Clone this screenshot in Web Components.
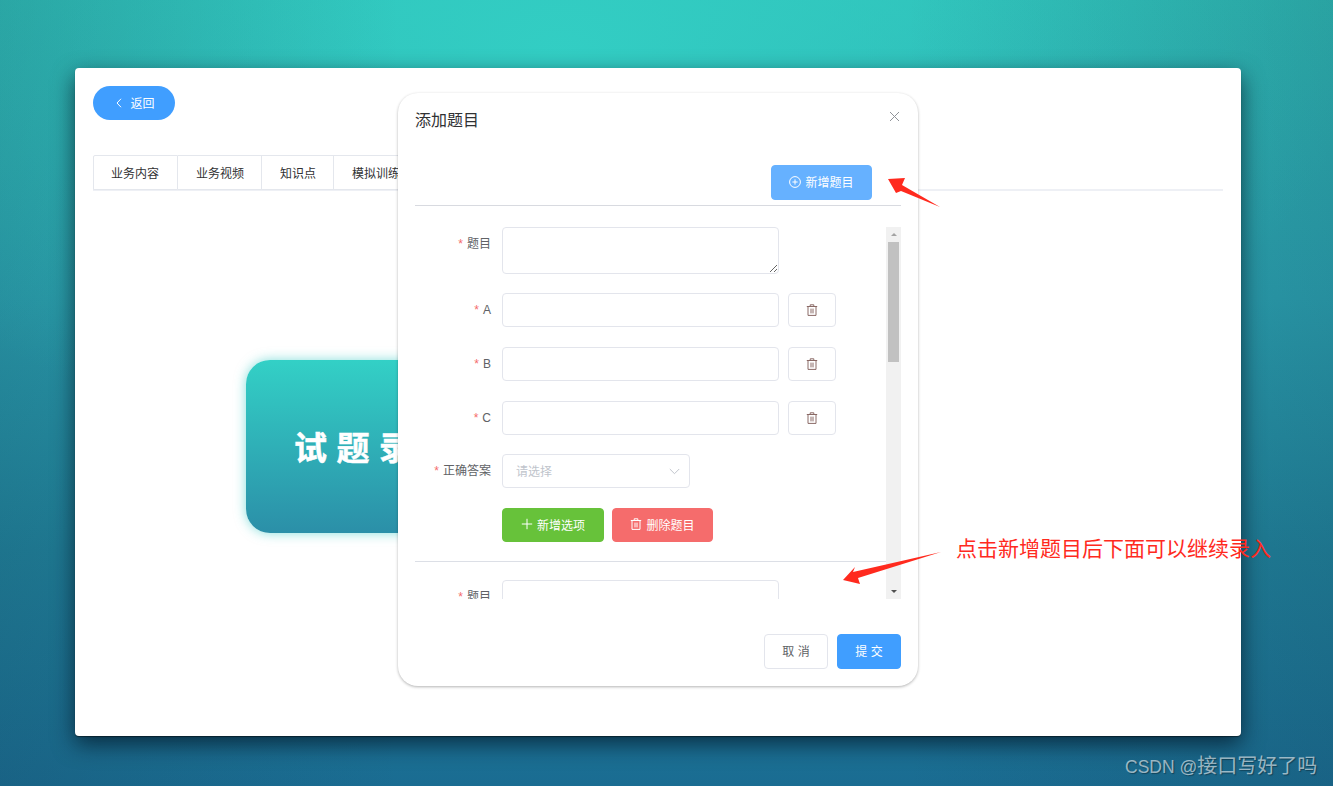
<!DOCTYPE html>
<html lang="zh">
<head>
<meta charset="utf-8">
<title>添加题目</title>
<style>
html, body { margin: 0; height: 100%; }
body {
  width: 1333px;
  height: 786px;
  overflow: hidden;
  box-sizing: border-box;
  padding: 68px 92px 50px 75px;
  position: relative;
  font-family: "Liberation Sans", "Noto Sans CJK SC", sans-serif;
  font-size: 12px;
  color: #606266;
  background:
    linear-gradient(90deg, rgba(20,60,80,.2), rgba(20,60,80,0) 30%, rgba(20,60,80,0) 68%, rgba(20,60,80,.2)),
    radial-gradient(ellipse 800px 420px at 560px 50px, rgba(51,208,197,.9), rgba(51,208,197,0) 100%),
    linear-gradient(180deg, #2fbcb6 0%, #2ba3b2 38%, #20829c 70%, #1a6c92 100%);
}
</style>
</head>
<body>
<page-panel>
  <back-button slot="top">返回</back-button>
  <tab-bar slot="top">
    <tab-item>业务内容</tab-item>
    <tab-item>业务视频</tab-item>
    <tab-item>知识点</tab-item>
    <tab-item>模拟训练</tab-item>
  </tab-bar>
  <hero-card>试题录入</hero-card>
</page-panel>

<add-dialog heading="添加题目">
  <ui-button slot="toolbar" kind="light" icon="circle-plus">新增题目</ui-button>

  <question-row label="题目" area></question-row>
  <question-row label="A" removable></question-row>
  <question-row label="B" removable></question-row>
  <question-row label="C" removable></question-row>
  <question-row label="正确答案" select></question-row>
  <question-actions>
    <ui-button kind="success" icon="plus">新增选项</ui-button>
    <ui-button kind="danger" icon="trash">删除题目</ui-button>
  </question-actions>
  <question-row label="题目" area></question-row>

  <ui-button slot="footer">取 消</ui-button>
  <ui-button slot="footer" kind="primary">提 交</ui-button>
</add-dialog>

<note-layer></note-layer>

<script>
const ICONS = {
  // element-ui style line icons
  "circle-plus": `<svg width="12" height="12" viewBox="0 0 12 12" fill="none" stroke="currentColor" stroke-width="1"><circle cx="6" cy="6" r="5.4"/><path d="M3.4 6h5.2M6 3.4v5.2"/></svg>`,
  plus: `<svg width="12" height="12" viewBox="0 0 12 12" fill="none" stroke="currentColor" stroke-width="1"><path d="M.8 6h10.4M6 .8v10.4"/></svg>`,
  trash: `<svg width="12" height="12" viewBox="0 0 12 12" fill="none" stroke="currentColor" stroke-width="1"><path d="M.8 2.5h10.4M4.2 2.5V.8h3.6v1.7M2 2.5v8.9h8V2.5M5 4.6v4.8M7 4.6v4.8"/></svg>`,
};

// every element here is just a style + markup string in an open shadow root
class BaseElement extends HTMLElement {
  constructor() {
    super();
    this.attachShadow({ mode: "open" });
  }
  connectedCallback() {
    this.shadowRoot.innerHTML = this.html;
  }
}

class PagePanel extends BaseElement {
  get html() {
    return `
<style>
:host {
  display: block;
  box-sizing: border-box;
  height: 668px;
  padding: 18px;
  background: #fff;
  border-radius: 4px;
  box-shadow: 0 1px 1px rgba(0, 0, 0, .45), 0 8px 22px rgba(0, 15, 30, .68);
}
.main { padding: 169px 0 0 153px; }
</style>
<slot name="top"></slot>
<div class="main"><slot></slot></div>`;
  }
}

class BackButton extends BaseElement {
  get html() {
    return `
<style>
:host {
  display: flex;
  align-items: center;
  justify-content: center;
  gap: 8px;
  box-sizing: border-box;
  width: 82px;
  height: 34px;
  padding: 0 0 1px 3px;
  border-radius: 17px;
  background: #409eff;
  color: #fff;
  font-size: 12px;
}
svg { display: block; }
</style>
<svg width="6" height="10" viewBox="0 0 6 10" fill="none" stroke="currentColor"><path d="M5 .8 1 5l4 4.2"/></svg>
<slot></slot>`;
  }
}

class TabBar extends BaseElement {
  get html() {
    return `
<style>
:host {
  display: flex;
  margin-top: 35px;
  height: 36px;
  box-sizing: border-box;
  border-bottom: 2px solid #eef0f5;
}
</style>
<slot></slot>`;
  }
}

class TabItem extends BaseElement {
  get html() {
    return `
<style>
:host {
  display: flex;
  align-items: center;
  height: 35px;
  box-sizing: border-box;
  padding: 0 17px 1px 18px;
  border: 1px solid #e4e7ed;
  border-left-width: 0;
  color: #303133;
}
:host(:first-child) { padding: 0 18px 1px 17px; border-left-width: 1px; border-top-left-radius: 2px; }
</style>
<slot></slot>`;
  }
}

class HeroCard extends BaseElement {
  get html() {
    return `
<style>
:host {
  display: flex;
  align-items: center;
  box-sizing: border-box;
  width: 320px;
  height: 173px;
  padding: 0 0 2px 48px;
  border-radius: 24px;
  background: linear-gradient(180deg, #33d0c6, #2b8fa8);
  box-shadow: 0 0 12px rgba(50, 200, 195, .6);
  color: #fff;
  font-size: 33px;
  font-weight: 700;
  letter-spacing: 9.5px;
  -webkit-text-stroke: .5px #fff;
  white-space: nowrap;
}
</style>
<slot></slot>`;
  }
}

class AddDialog extends BaseElement {
  get html() {
    return `
<style>
:host {
  display: block;
  position: absolute;
  left: 398px;
  top: 93px;
  width: 520px;
  box-sizing: border-box;
  padding: 17px;
  background: #fff;
  border-radius: 20px;
  box-shadow: 0 1px 3px rgba(0, 0, 0, .3);
}
header {
  display: flex;
  justify-content: space-between;
  align-items: flex-start;
  height: 20px;
  line-height: 22px;
  font-size: 16px;
  color: #303133;
}
.close { margin: 1px 1px 0 0; color: #909399; display: block; }
.toolbar {
  display: flex;
  justify-content: flex-end;
  margin-top: 35px;
  padding: 0 29px 5px 0;
  border-bottom: 1px solid #d8dae0;
}
.scroll {
  display: flex;
  margin-top: 21px;
  height: 372px;
}
.clip { flex: 1; overflow: hidden; min-width: 0; }
footer {
  display: flex;
  justify-content: flex-end;
  gap: 9px;
  margin-top: 35px;
}
</style>
<header>
  <span>${this.getAttribute("heading")}</span>
  <svg class="close" width="11" height="11" viewBox="0 0 11 11" fill="none" stroke="currentColor"><path d="M1 1l9 9M10 1l-9 9"/></svg>
</header>
<div class="toolbar"><slot name="toolbar"></slot></div>
<div class="scroll">
  <div class="clip"><slot></slot></div>
  <scroll-track></scroll-track>
</div>
<footer><slot name="footer"></slot></footer>`;
  }
}

class ScrollTrack extends BaseElement {
  get html() {
    return `
<style>
:host {
  display: flex;
  flex-direction: column;
  width: 15px;
  height: 372px;
  flex: none;
  background: #f1f1f1;
}
.end { height: 15px; display: flex; align-items: center; justify-content: center; flex: none; }
.tri { width: 0; height: 0; border-left: 3px solid transparent; border-right: 3px solid transparent; }
.up { border-bottom: 3px solid #a3a3a3; }
.down { border-top: 3px solid #505050; }
.thumb { height: 120px; margin: 0 2px; background: #c1c1c1; flex: none; }
.rest { flex: 1; }
</style>
<div class="end"><div class="tri up"></div></div>
<div class="thumb"></div>
<div class="rest"></div>
<div class="end"><div class="tri down"></div></div>`;
  }
}

class QuestionRow extends BaseElement {
  get html() {
    const isArea = this.hasAttribute("area");
    let field = `<input class="box" type="text">`;
    if (isArea) field = `<textarea class="box"></textarea>`;
    if (this.hasAttribute("select")) {
      field = `<div class="box select"><span>请选择</span>
        <svg width="11" height="7" viewBox="0 0 11 7" fill="none" stroke="#c0c4cc"><path d="M.8 1l4.7 4.7L10.2 1"/></svg></div>`;
    }
    const remove = this.hasAttribute("removable")
      ? `<ui-button class="del" kind="trash-only" icon="trash"></ui-button>`
      : "";
    return `
<style>
:host {
  display: flex;
  align-items: flex-start;
  margin-bottom: 19.75px;
}
:host([area]) { margin-bottom: 19px; }
label {
  width: 77px;
  flex: none;
  box-sizing: border-box;
  padding-right: 1px;
  text-align: right;
  height: 34px;
  line-height: 34px;
  color: #606266;
  white-space: nowrap;
}
label i { font-style: normal; color: #f56c6c; margin-right: 4px; }
.box {
  display: block;
  margin: 0 0 0 10px;
  box-sizing: border-box;
  width: 277px;
  height: 34px;
  padding: 0 14px;
  background: #fff;
  border: 1px solid #e3e5ec;
  border-radius: 4px;
  outline: none;
  font: inherit;
}
textarea.box { height: 47px; padding: 5px 14px; }
.select {
  width: 188px;
  display: flex;
  align-items: center;
  justify-content: space-between;
  padding: 0 9px 0 13px;
  color: #c0c4cc;
}
.select span { margin-top: -2px; }
.del { margin-left: 9px; }
</style>
<label><i>*</i>${this.getAttribute("label")}</label>
${field}
${remove}`;
  }
}

class QuestionActions extends BaseElement {
  get html() {
    return `
<style>
:host {
  display: flex;
  gap: 8px;
  padding: 0 0 19px 87px;
  margin-bottom: 18px;
  border-bottom: 1px solid #dcdfe6;
}
</style>
<slot></slot>`;
  }
}

class UiButton extends BaseElement {
  get html() {
    const icon = ICONS[this.getAttribute("icon")] || "";
    return `
<style>
:host {
  display: inline-flex;
  align-items: center;
  justify-content: center;
  gap: 4px;
  box-sizing: border-box;
  height: 35px;
  width: 64px;
  padding-bottom: 2px;
  border: 1px solid #e3e5ec;
  border-radius: 4px;
  background: #fff;
  color: #606266;
  font-size: 12px;
  flex: none;
}
:host([kind="primary"]) { background: #409eff; border-color: #409eff; color: #fff; }
:host([kind="light"]) { width: 101px; background: #66b1ff; border-color: #66b1ff; color: #fff; }
:host([kind="success"]) { width: 102px; height: 34px; background: #67c23a; border-color: #67c23a; color: #fff; }
:host([kind="danger"]) { width: 101px; height: 34px; background: #f56c6c; border-color: #f56c6c; color: #fff; }
:host([kind="trash-only"]) { width: 48px; height: 34px; padding-bottom: 0; color: #8a6a66; }
svg { display: block; }
</style>
${icon}<slot></slot>`;
  }
}

class NoteLayer extends BaseElement {
  get html() {
    return `
<style>
:host { position: absolute; left: 0; top: 0; width: 1333px; height: 786px; pointer-events: none; }
svg { position: absolute; left: 0; top: 0; }
.note {
  position: absolute;
  left: 956px;
  top: 533px;
  font-size: 21px;
  line-height: 32px;
  color: #ff2a1e;
  white-space: nowrap;
}
.mark {
  position: absolute;
  left: 1125px;
  top: 752px;
  font-size: 20px;
  line-height: 29px;
  color: rgba(255, 255, 255, .58);
  text-shadow: 1px 1px 1px rgba(0, 0, 0, .35);
  white-space: nowrap;
}
.mark span { font-size: 17.5px; }
</style>
<svg width="1333" height="786">
  <polygon fill="#ff2a1e" points="888,179 905,178 902,185 940,207 901,191 896,193"/>
  <polygon fill="#ff2a1e" points="843,580 855,567 853,572 941,552 858,578 860,584"/>
</svg>
<div class="note">点击新增题目后下面可以继续录入</div>
<div class="mark"><span>CSDN @</span>接口写好了吗</div>`;
  }
}

customElements.define("page-panel", PagePanel);
customElements.define("back-button", BackButton);
customElements.define("tab-bar", TabBar);
customElements.define("tab-item", TabItem);
customElements.define("hero-card", HeroCard);
customElements.define("add-dialog", AddDialog);
customElements.define("scroll-track", ScrollTrack);
customElements.define("question-row", QuestionRow);
customElements.define("question-actions", QuestionActions);
customElements.define("ui-button", UiButton);
customElements.define("note-layer", NoteLayer);
</script>
</body>
</html>
